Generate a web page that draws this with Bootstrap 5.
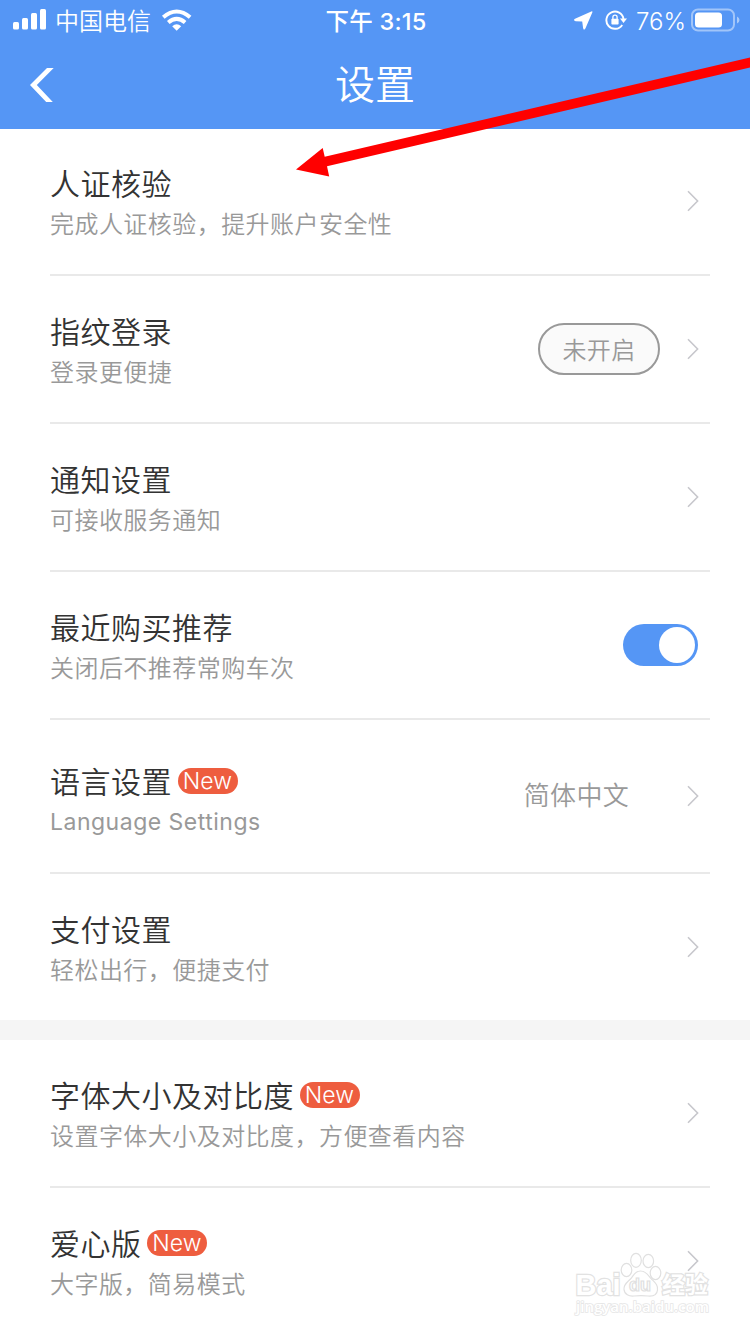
<!DOCTYPE html>
<html lang="zh-CN">
<head>
<meta charset="utf-8">
<meta name="viewport" content="width=device-width, initial-scale=1">
<title>设置</title>
<link href="https://cdn.jsdelivr.net/npm/bootstrap@5.3.0/dist/css/bootstrap.min.css" rel="stylesheet">
<style>
  body { font-family: Inter, "Noto Sans CJK SC", sans-serif; color: #333; background: #fff; width: 750px; height: 1334px; overflow: hidden; font-weight: 350; }
  .app-header { background: #5596f5; height: 129px; }
  .status-bar { height: 40px; font-size: 24px; line-height: 40px; padding: 0 11px 0 13px; }
  .status-bar span, .clock { padding-top: 3px; }
  .status-side { flex: 1 1 0; }
  .clock { font-weight: 500; font-size: 23.5px; letter-spacing: .2px; }
  .title-bar { height: 89px; padding-left: 29px; padding-right: 29px; }
  .page-title { font-size: 40px; line-height: 88px; font-weight: 350; }
  .setting { height: 148px; margin: 0 40px 0 50px; padding-right: 11px; border-bottom: 2px solid #e9e9e9; }
  .setting.first { height: 147px; }
  .setting.first > svg { margin-top: -1px; }
  .setting.tall { height: 154px; }
  .setting.last { height: 146px; border-bottom: 0; }
  .label-box { padding-top: 6px; }
  .first .label-box { padding-top: 5px; }
  .tall .label-box { padding-top: 12px; }
  .label { font-size: 30px; line-height: 40px; height: 40px; letter-spacing: .5px; }
  .desc { font-size: 24px; line-height: 42px; height: 40px; letter-spacing: .45px; color: #999; }
  .lang-desc { font-size: 23px; font-weight: 400; line-height: 41px; letter-spacing: .5px; }
  .new-tag { width: 60px; height: 26px; margin: -2px 0 0 5.5px; font-size: 23px; line-height: 26px; background: #ee5d3f; color: #fff; letter-spacing: .1px; }
  .status-pill { width: 122px; height: 52px; border: 2px solid #999; background: #fafafa; font-size: 24px; line-height: 51px; color: #999; letter-spacing: .4px; margin-right: 27px; }
  .value { font-size: 26px; line-height: 38px; letter-spacing: .3px; color: #999; margin: 0 58px 0 0; }
  .toggle { width: 75px; height: 42px; background: #5596f5; padding: 3px; margin-right: 1px; }
  .knob { width: 36px; height: 36px; background: #fff; }
  .divider { height: 20px; background: #f5f5f5; }
  .pointer { left: 0; top: 0; pointer-events: none; }
  .watermark { left: 570px; top: 1248px; }
</style>
</head>
<body class="position-relative">
<header class="app-header text-white">
  <div class="status-bar d-flex align-items-center">
    <div class="status-side d-flex align-items-center">
      <svg width="34" height="22" viewBox="0 0 34 22" fill="#fff"><rect y="13" width="6" height="7.500" rx="1.5"/><rect x="9" y="9" width="6" height="11.500" rx="1.5"/><rect x="18" y="4" width="6" height="16.500" rx="1.5"/><rect x="27" y="0" width="6" height="20.500" rx="1.5"/></svg>
      <span style="margin-left:8px">中国电信</span>
      <svg width="36" height="24" viewBox="0 0 36 24" style="margin-left:10px"><g fill="none" stroke="#fff" stroke-width="4"><path d="M2.300 9.300Q15.700-2.300 29.100 9.300"/><path d="M7.300 14.400Q15.700 7.200 24.100 14.400"/></g><path d="M11.200 18.200Q15.700 14.500 20.200 18.200L15.700 22.700Z" fill="#fff"/></svg>
    </div>
    <div class="clock">下午 3:15</div>
    <div class="status-side d-flex align-items-center justify-content-end">
      <svg width="19" height="19" viewBox="0 0 19 19" fill="#fff"><path d="M17.300.4Q19 0 18.300 1.600L11.400 17.500Q9.700 20 9.100 17L8.200 10.600 1.700 10.200Q-1.200 9.300 1 7.800Z"/></svg>
      <svg width="22" height="22" viewBox="0 0 22 22" style="margin:0 9px 0 12px"><path d="M17.200 15.900A8.600 8.600 0 1 1 18.500 10" fill="none" stroke="#fff" stroke-width="1.900"/><path d="M15 9.600h7l-3.500 4.300z" fill="#fff"/><rect x="6.400" y="9.800" width="7.200" height="5.800" rx=".8" fill="#fff"/><path d="M7.900 10V8.200a2.100 2.100 0 0 1 4.200 0v1.800" fill="none" stroke="#fff" stroke-width="1.300"/></svg>
      <span style="font-size:24px">76%</span>
      <svg width="49" height="24" viewBox="0 0 49 24" style="margin:-1px -1px 0 5px"><rect x="1" y="1.500" width="42" height="21" rx="6" fill="none" stroke="#fff" stroke-opacity=".45" stroke-width="2"/><rect x="4" y="4.500" width="27" height="15" rx="3.500" fill="#fff"/><path d="M46 8.500q2.500 1 2.500 3.500T46 15.500z" fill="#fff" fill-opacity=".5"/></svg>
    </div>
  </div>
  <div class="title-bar d-flex align-items-center justify-content-between">
    <svg width="26" height="36" viewBox="0 0 26 36"><path d="M18 1h6.700L7.800 18l16 17h-6.600L1 18z" fill="#fff"/></svg>
    <h1 class="page-title m-0">设置</h1>
    <span style="width:26px"></span>
  </div>
</header>

<svg class="d-none"><symbol id="chev" viewBox="0 0 12 22"><path d="M1 1.200L10.600 11 1 20.800" fill="none" stroke="#c7c7cc" stroke-width="1.600"/></symbol></svg>

<main>
  <section>
    <div class="setting first d-flex align-items-center justify-content-between">
      <div class="label-box"><div class="label">人证核验</div><div class="desc">完成人证核验，提升账户安全性</div></div>
      <svg width="12" height="22"><use href="#chev"/></svg>
    </div>
    <div class="setting d-flex align-items-center justify-content-between">
      <div class="label-box"><div class="label">指纹登录</div><div class="desc">登录更便捷</div></div>
      <div class="d-flex align-items-center"><span class="status-pill rounded-pill text-center">未开启</span><svg width="12" height="22"><use href="#chev"/></svg></div>
    </div>
    <div class="setting d-flex align-items-center justify-content-between">
      <div class="label-box"><div class="label">通知设置</div><div class="desc">可接收服务通知</div></div>
      <svg width="12" height="22"><use href="#chev"/></svg>
    </div>
    <div class="setting d-flex align-items-center justify-content-between">
      <div class="label-box"><div class="label">最近购买推荐</div><div class="desc">关闭后不推荐常购车次</div></div>
      <div class="toggle rounded-pill d-flex justify-content-end" role="switch" aria-checked="true"><span class="knob rounded-circle"></span></div>
    </div>
    <div class="setting tall d-flex align-items-center justify-content-between">
      <div class="label-box"><div class="label d-flex align-items-center">语言设置<span class="new-tag rounded-pill text-center">New</span></div><div class="desc lang-desc">Language Settings</div></div>
      <div class="d-flex align-items-center"><span class="value">简体中文</span><svg width="12" height="22"><use href="#chev"/></svg></div>
    </div>
    <div class="setting last d-flex align-items-center justify-content-between">
      <div class="label-box"><div class="label">支付设置</div><div class="desc">轻松出行，便捷支付</div></div>
      <svg width="12" height="22"><use href="#chev"/></svg>
    </div>
  </section>
  <div class="divider"></div>
  <section>
    <div class="setting d-flex align-items-center justify-content-between">
      <div class="label-box"><div class="label d-flex align-items-center">字体大小及对比度<span class="new-tag rounded-pill text-center">New</span></div><div class="desc">设置字体大小及对比度，方便查看内容</div></div>
      <svg width="12" height="22"><use href="#chev"/></svg>
    </div>
    <div class="setting last d-flex align-items-center justify-content-between">
      <div class="label-box"><div class="label d-flex align-items-center">爱心版<span class="new-tag rounded-pill text-center">New</span></div><div class="desc">大字版，简易模式</div></div>
      <svg width="12" height="22"><use href="#chev"/></svg>
    </div>
  </section>
</main>

<svg class="pointer position-absolute" width="750" height="190"><path d="M296 169.500L322.700 148l2 8.800L750 57.500v10L327 166.300l2.200 10.200z" fill="#f00"/></svg>

<svg class="watermark position-absolute" width="150" height="76" viewBox="570 1248 150 76" fill="#fff" stroke="#e0e0e0" stroke-width="1.200">
  <ellipse cx="626.500" cy="1270" rx="5.300" ry="6.700"/><ellipse cx="636" cy="1260.300" rx="5.300" ry="7"/><ellipse cx="648.300" cy="1261" rx="5.300" ry="6.700"/><ellipse cx="655.500" cy="1273" rx="5.300" ry="6.700"/>
  <path d="M640.500 1271c6 0 8 5 11 8 4 4 6.500 6 6 11-.5 5-4 6.500-9.500 6-5-.5-9-.5-14 0-5 .5-9.500-1.500-10-6.500-.5-5 3-7 6.500-10.500 3-3 4-8 10-8z"/>
  <g font-family="Liberation Sans, sans-serif" font-weight="700" paint-order="stroke" stroke-width="2.400" stroke="#e2e2e2">
    <text x="575.500" y="1294.500" font-size="29" textLength="45" lengthAdjust="spacingAndGlyphs">Bai</text>
    <text x="662" y="1293" font-size="23" font-family="Noto Sans CJK SC, sans-serif" textLength="46" lengthAdjust="spacingAndGlyphs">经验</text>
  </g>
  <text x="629" y="1291" font-family="Liberation Sans, sans-serif" font-weight="700" font-size="18" textLength="22" lengthAdjust="spacingAndGlyphs">du</text>
  <text x="576" y="1312" font-family="Open Sans, sans-serif" font-weight="600" font-size="15" stroke-width="1.600" stroke="#e6e6e6" paint-order="stroke" textLength="133" lengthAdjust="spacingAndGlyphs">jingyan.baidu.com</text>
</svg>
<script src="https://cdn.jsdelivr.net/npm/bootstrap@5.3.0/dist/js/bootstrap.bundle.min.js"></script>
</body>
</html>
